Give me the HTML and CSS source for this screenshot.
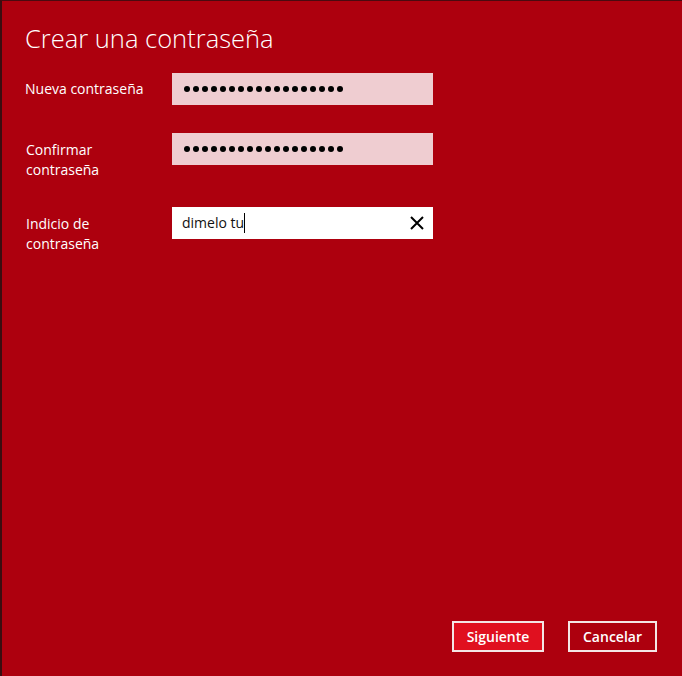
FILE: index.html
```html
<!DOCTYPE html>
<html lang="es">
<head>
<meta charset="utf-8">
<title>Crear una contraseña</title>
<link rel="stylesheet" href="styles.css">
</head>
<body>
<div class="window">
  <h1 class="title">Crear una contraseña</h1>
  <div class="form">
    <div class="row">
      <label class="label">Nueva contraseña</label>
      <div class="field field-pw">
        <span class="dots"><i></i><i></i><i></i><i></i><i></i><i></i><i></i><i></i><i></i><i></i><i></i><i></i><i></i><i></i><i></i><i></i><i></i><i></i></span>
      </div>
    </div>
    <div class="row">
      <label class="label">Confirmar<br>contraseña</label>
      <div class="field field-pw">
        <span class="dots"><i></i><i></i><i></i><i></i><i></i><i></i><i></i><i></i><i></i><i></i><i></i><i></i><i></i><i></i><i></i><i></i><i></i><i></i></span>
      </div>
    </div>
    <div class="row">
      <label class="label">Indicio de<br>contraseña</label>
      <div class="field field-text">
        <span class="value">dimelo tu</span><span class="caret"></span>
        <svg class="clear" width="14" height="14" viewBox="0 0 14 14"><path d="M1 1 L13 13 M13 1 L1 13" stroke="#000" stroke-width="2" fill="none"/></svg>
      </div>
    </div>
  </div>
  <div class="footer">
    <button class="btn btn-primary">Siguiente</button>
    <button class="btn">Cancelar</button>
  </div>
</div>
</body>
</html>
```
FILE: styles.css
```css
html, body {
  margin: 0;
  padding: 0;
  height: 100%;
}
body {
  background: #ad000e;
  font-family: "Open Sans", "Noto Sans", sans-serif;
  color: #fff;
}
.window {
  box-sizing: border-box;
  height: 676px;
  border-left: 2px solid #3a0d10;
  border-top: 1px solid #4a0a10;
  display: flex;
  flex-direction: column;
  padding: 0 25px 24px 23px;
}
.title {
  margin: 20px 0 0 0;
  font-weight: 300;
  font-size: 25.5px;
  line-height: 34px;
  letter-spacing: 0;
}
.form {
  margin-top: 18px;
  display: flex;
  flex-direction: column;
  gap: 28px;
}
.row {
  display: grid;
  grid-template-columns: 147px 261px;
  align-items: start;
}
.label {
  font-size: 14px;
  line-height: 20px;
  padding-top: 7px;
  margin-bottom: -1px;
  padding-left: 1px;
}
.row:first-child .label { padding-left: 0; padding-top: 6px; margin-bottom: 0; }
.field {
  height: 32px;
  box-sizing: border-box;
  display: flex;
  align-items: center;
  padding-left: 12px;
}
.field-pw {
  background: #efcdd1;
}
.dots {
  display: flex;
  gap: 3px;
}
.dots i {
  display: block;
  width: 6px;
  height: 6px;
  border-radius: 50%;
  background: #000;
}
.field-text {
  background: #fff;
  color: #111;
  padding-left: 10px;
  padding-right: 9px;
  font-size: 14px;
}
.value {
  line-height: 20px;
}
.caret {
  width: 1px;
  height: 20px;
  background: #000;
}
.clear {
  margin-left: auto;
}
.footer {
  margin-top: auto;
  display: flex;
  justify-content: flex-end;
  gap: 24px;
}
.btn {
  box-sizing: border-box;
  height: 31px;
  border: 2px solid #f4e6e6;
  background: #ad000e;
  color: #fff;
  font-family: "Open Sans", "Noto Sans", sans-serif;
  font-weight: 600;
  font-size: 14px;
  padding: 0;
  width: 89px;
}
.btn-primary {
  background: #e0101f;
  width: 92px;
}
```
